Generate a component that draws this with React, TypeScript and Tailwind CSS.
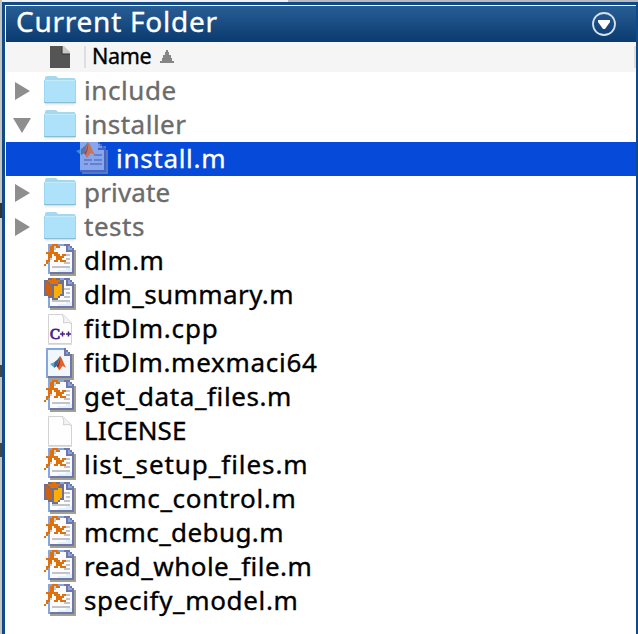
import React from "react";

type Kind = "folder" | "fx" | "cube" | "cpp" | "mex" | "blank" | "script";

const palette: Record<string, string> = {
  l: "#85a6de",
  b: "#7076a8",
  m: "#b5d2f4",
  w: "#fbfcff",
  p: "#e2f1fc",
  g: "#c4c4c8",
  s: "#a1a191",
  o: "#e0700a",
  r: "#cf600d",
  y: "#ffad00",
  d: "#6d7092",
};

const pageMap = [
  "..llllllllbbb...",
  "..lmmmmwwwwblb..",
  "..lmmmwwwwwbllb.",
  "..lmmwwwwwwbbbbs",
  "..lmwwwwwwwwwwbs",
  "..lmwwwwwwgggwbs",
  "..lmwwwwwwwwwwbs",
  "..lmwwwwwwwggwbs",
  "..lwwwwwwwwwwwbs",
  "..lwwwwwwwgggwbs",
  "..lwwwwwwwwwwwbs",
  "..lwgggggggggwbs",
  "..lwwwwwwwwpppbs",
  "..lwwwwpppppppbs",
  "..lbbbbbbbbbbbbs",
  "...sssssssssssss",
];

const fxMap = [
  "....ooo.........",
  "...oo.oo........",
  "...oo...........",
  "...oo...........",
  ".oooooo.........",
  "..oo.ooo.oo.....",
  "..oo..oooo......",
  "..o...ooo.......",
  ".oo..oo.ooo.....",
  ".o..............",
  "o...............",
];

const cubeMap = [
  "..ddoodd..",
  "ddoooooodd",
  "drdooooddd",
  "drrddddyyd",
  "drrrdyyyyd",
  "drrrdyyyyd",
  "drrrdyyyyd",
  "drrrdyyyyd",
  "ddrrdyyydd",
  "..dddyyd..",
  "....ddd...",
];

function Pixels({ map }: { map: string[] }) {
  return (
    <g shapeRendering="crispEdges">
      {map.flatMap((row, y) =>
        [...row].map((c, x) =>
          c === "." ? null : <rect key={`${x}-${y}`} x={x * 2} y={y * 2} width="2" height="2" fill={palette[c]} />,
        ),
      )}
    </g>
  );
}

function Membrane() {
  return (
    <g shapeRendering="geometricPrecision">
      <path d="M0 9 L5 7 L8 11 L5 13Z" fill="#56a6d4" />
      <path d="M5 7 L9 4 L12 0 L10 9 L7 12 L5 13Z" fill="#3e6496" />
      <path d="M12 0 C15 3 16 8 19 13 L15 11 L11 16 L8 11 C10 9 10 3 12 0Z" fill="#e2632a" />
      <path d="M12 0 C12 5 10 9 8 11 L9.500 13 C12 9 12.500 4 12 0Z" fill="#8a2a1c" />
    </g>
  );
}

function Icon({ kind }: { kind: Kind }) {
  return (
    <svg width="32" height="34" viewBox="0 0 32 34" className="shrink-0 overflow-visible">
      {kind === "folder" && (
        <g>
          <rect x="1" y="29" width="30" height="2.5" fill="#f1f1f1" />
          <path d="M1 29.5V4Q1 2 3 2H11Q13 2 14 4H30Q31.500 4 31.500 6V29.500Z" fill="#a3d8ee" />
          <rect x="0" y="7" width="32" height="22" fill="#aee2fa" />
          <path d="M0 6.500H32" stroke="#c3ebfb" />
          <path d="M.5 6V29M31.500 6V29" stroke="#9bd7f1" />
          <path d="M0 28.500H32" stroke="#87bdd5" />
        </g>
      )}
      {(kind === "fx" || kind === "cube") && <Pixels map={pageMap} />}
      {kind === "fx" && <Pixels map={fxMap} />}
      {kind === "cube" && <Pixels map={cubeMap} />}
      {(kind === "cpp" || kind === "blank") && (
        <g>
          <path d="M4.500 3V31.500H27.500V11L19 2.500H4.500Z" fill="#fefefe" stroke="#d2d2d2" />
          <path d="M4 32.500H28" stroke="#dedede" />
          <path d="M18.500 3Q20.500 6 19.500 11Q24 9.500 27.500 11.500" fill="#f4f4f4" stroke="#cfcfcf" />
          {kind === "cpp" && (
            <g fill="#45208a" stroke="#45208a">
              <text x="6" y="27" fontSize="15" strokeWidth=".8" fontFamily="Liberation Serif, serif">C</text>
              <path d="M16 22H21M18.500 19.500V24.500M22 22H27M24.500 19.500V24.500" strokeWidth="1.500" />
            </g>
          )}
        </g>
      )}
      {kind === "mex" && (
        <g shapeRendering="crispEdges">
          <path d="M4 4H24V8H30V34H4Z" fill="#a1a191" />
          <path d="M2 2H22V4H24V6H26V8H28V32H2Z" fill="#85a6de" />
          <path d="M20 2H22V4H24V6H26V8H28V32H4V30H26V10H20Z" fill="#7076a8" />
          <path d="M4 4H20V10H26V30H4Z" fill="#f0f8fd" />
          <path d="M22 6H24V8H22Z" fill="#85a6de" />
          <g transform="translate(6 10) scale(.84 .9)"><Membrane /></g>
        </g>
      )}
      {kind === "script" && (
        <g shapeRendering="crispEdges">
          <path d="M6 4H30V8H32V32H6Z" fill="#5678bd" />
          <path d="M4 0H22V2H24V4H26V6H28V30H4Z" fill="#86a7ee" />
          <path d="M22 0H24V2H26V4H28V6H30V30H4V28H28V8H22Z" fill="#4563c9" />
          <path d="M22 2H24V4H26V6H22Z" fill="#7299e9" />
          <path d="M18 13H26M8 18H16M18 18H26M8 22H12M14 22H26" stroke="#6680cd" strokeWidth="2" fill="none" />
          <g opacity=".72"><Membrane /></g>
        </g>
      )}
    </svg>
  );
}

const rows: { name: string; kind: Kind; arrow?: "right" | "down"; track: string }[] = [
  { name: "include", kind: "folder", arrow: "right", track: "tracking-[0.6px]" },
  { name: "installer", kind: "folder", arrow: "down", track: "tracking-[0.5px]" },
  { name: "install.m", kind: "script", track: "tracking-[0.7px]" },
  { name: "private", kind: "folder", arrow: "right", track: "tracking-[0.15px]" },
  { name: "tests", kind: "folder", arrow: "right", track: "tracking-[0.5px]" },
  { name: "dlm.m", kind: "fx", track: "tracking-[0.4px]" },
  { name: "dlm_summary.m", kind: "cube", track: "tracking-[0.42px]" },
  { name: "fitDlm.cpp", kind: "cpp", track: "tracking-[0.8px]" },
  { name: "fitDlm.mexmaci64", kind: "mex", track: "tracking-[0.73px]" },
  { name: "get_data_files.m", kind: "fx", track: "tracking-[0.6px]" },
  { name: "LICENSE", kind: "blank", track: "tracking-[0.1px]" },
  { name: "list_setup_files.m", kind: "fx", track: "tracking-[0.94px]" },
  { name: "mcmc_control.m", kind: "cube", track: "tracking-[0.7px]" },
  { name: "mcmc_debug.m", kind: "fx", track: "tracking-[0.4px]" },
  { name: "read_whole_file.m", kind: "fx", track: "tracking-[0.46px]" },
  { name: "specify_model.m", kind: "fx", track: "tracking-[0.65px]" },
];

export default function App() {
  return (
    <div className="flex h-[634px] w-[638px] overflow-hidden bg-white font-['Noto_Sans',sans-serif] [-webkit-text-stroke:0.35px]">
      <div className="flex w-[2px] shrink-0 flex-col bg-[#c4c4c2]">
        <div className="mt-[203px] h-[15px] bg-[#333]" />
        <div className="h-[147px] bg-[#cdcdd0]" />
        <div className="h-[12px] bg-[#444]" />
        <div className="mt-[66px] h-[14px] bg-[#444]" />
      </div>
      <div className="flex min-w-0 flex-1 flex-col">
        <div className="flex h-[2px] shrink-0">
          <div className="w-[286px] bg-[#f0f0f0]" />
          <div className="flex-1 bg-[#b9b9bf]" />
        </div>
        <div className="flex min-h-0 flex-1 flex-col border-x-[3px] border-r-2 border-t-[3px] border-[#124a88]">
          <div className="flex min-h-0 flex-1 flex-col border-l border-t border-white">
            <header className="flex h-9 shrink-0 items-center justify-between bg-linear-to-b from-[#285e94] to-[#093a70] pl-[10px] pr-[20px] text-[28px] leading-7 text-white">
              <span className="whitespace-pre pb-[7px] tracking-[0.75px]">Current Folder</span>
              <svg width="24" height="24" viewBox="0 0 24 24">
                <circle cx="12" cy="12" r="11" fill="none" stroke="#d4e0ea" strokeWidth="1.800" />
                <path d="M6 8H18V10L13 17H11L6 10Z" fill="#fff" />
              </svg>
            </header>
            <div className="flex h-[30px] shrink-0 items-center bg-[#f5f5f5] text-[21.500px] leading-[26px] text-black">
              <svg className="ml-[44px]" width="20" height="22" viewBox="0 0 20 22">
                <path d="M0 0H13L20 8V22H0Z" fill="#555" />
                <path d="M12 0H14L20 6V8H12Z" fill="#c9c9c9" />
                <path d="M12 0V8H20" stroke="#333" fill="none" />
              </svg>
              <div className="ml-[14px] h-[22px] w-[2px] bg-[#dedede]" />
              <span className="ml-[6px] w-[60px] whitespace-nowrap pb-[3px] tracking-[-0.3px]">Name</span>
              <svg className="ml-[8px]" width="14" height="14" viewBox="0 0 14 14">
                <path d="M6 0H8V2H9V5H11V8H12V11H14V13H0V11H2V8H3V5H5V2H6Z" fill="#858585" />
              </svg>
              <div className="ml-auto h-[22px] w-[2px] bg-[#dedede]" />
            </div>
            <ul className="pt-[2px]">
              {rows.map((r) => (
                <li
                  key={r.name}
                  className={`flex h-[34px] items-center text-[26px] leading-[32px] ${
                    r.kind === "script" ? "bg-[#064ad9] pl-[32px] text-white" : r.kind === "folder" ? "text-[#6b6b6b]" : "text-black"
                  }`}
                >
                  <span className="flex w-[38px] shrink-0 pl-[7px]">
                    {r.arrow && (
                      <svg width="20" height="18" viewBox="0 0 20 18">
                        <path d={r.arrow === "right" ? "M2 0L17 9L2 18Z" : "M0 2H18L9 17Z"} fill="#8e8e8e" />
                      </svg>
                    )}
                  </span>
                  <Icon kind={r.kind} />
                  <span className={`ml-[8px] whitespace-nowrap pb-[2px] ${r.track}`}>{r.name}</span>
                </li>
              ))}
            </ul>
          </div>
        </div>
      </div>
    </div>
  );
}
